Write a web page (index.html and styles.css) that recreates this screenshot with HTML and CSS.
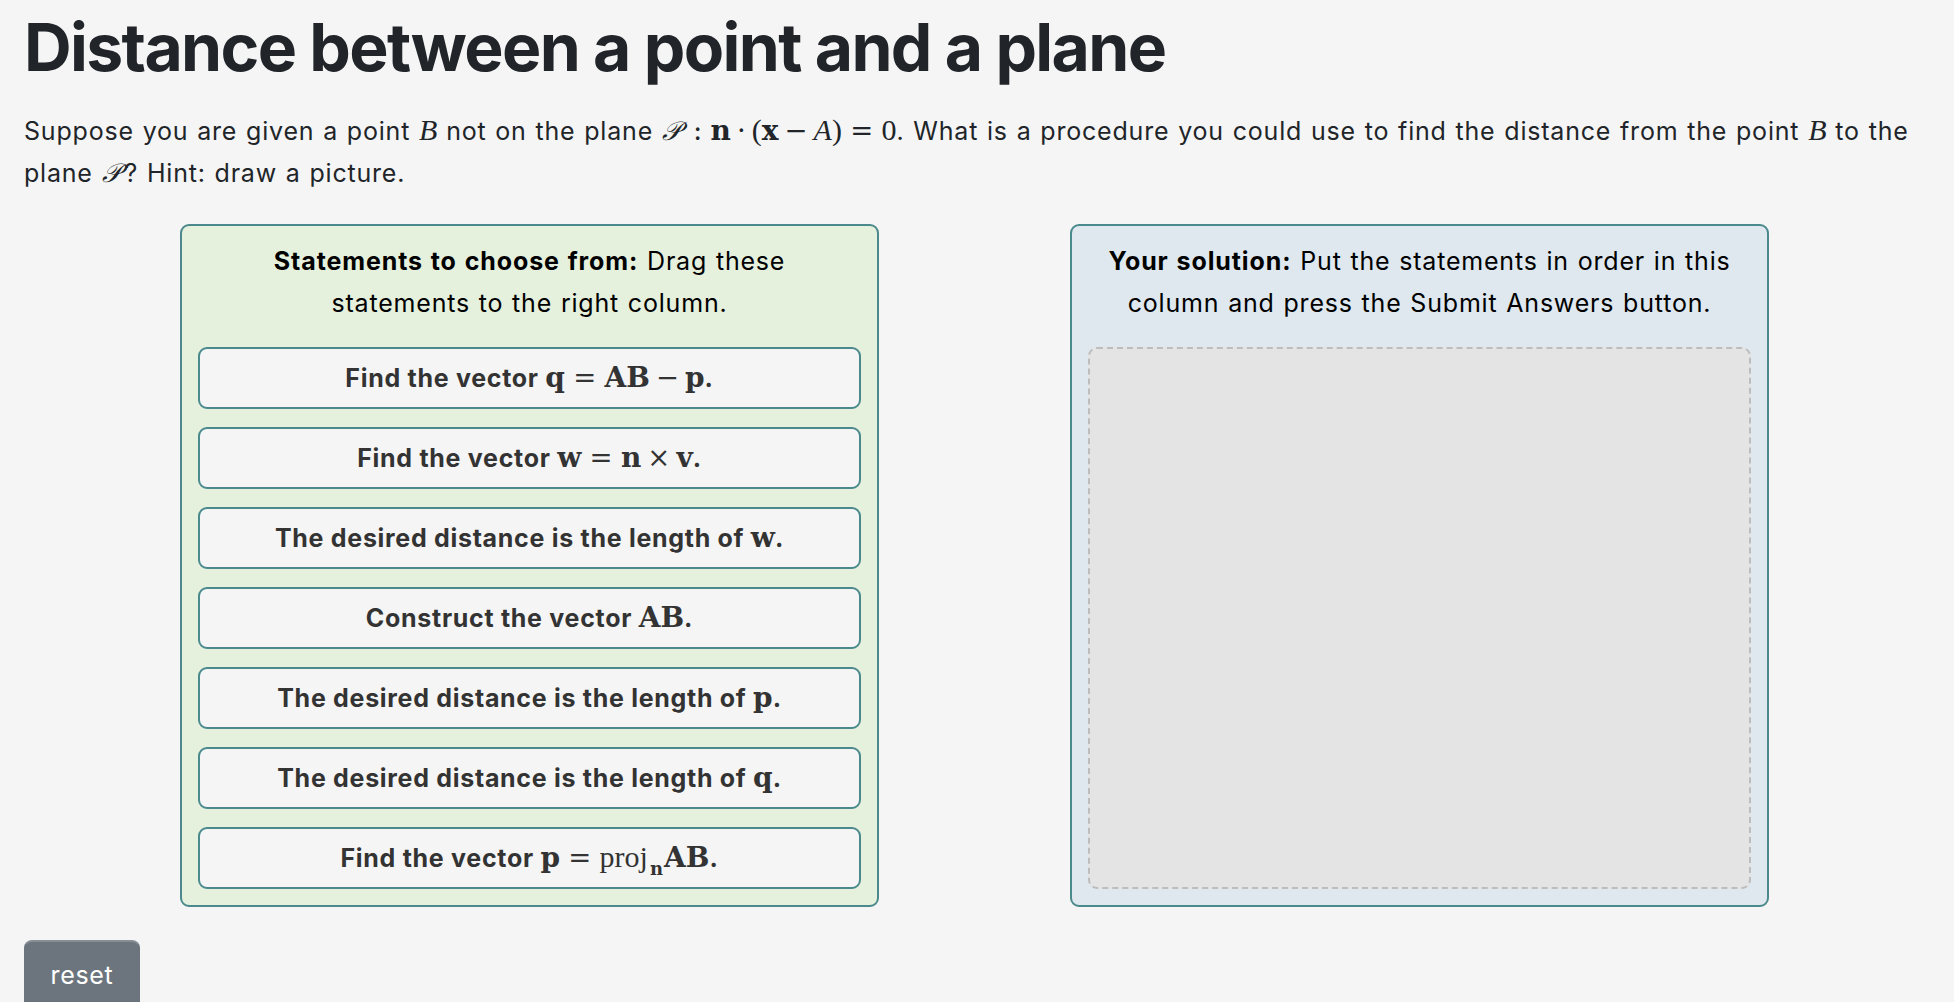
FILE: index.html
```html
<!DOCTYPE html>
<html lang="en">
<head>
<meta charset="utf-8">
<title>Distance between a point and a plane</title>
<link rel="stylesheet" href="styles.css">
</head>
<body>
<h1 class="title">Distance between a point and a plane</h1>
<p class="prompt">Suppose you are given a point <span class="mi">B</span> not on the plane <span class="cal">𝒫</span><span class="rel">:</span><span class="mb">n</span><span class="bin">·</span><span class="mr">(</span><span class="mb">x</span><span class="bin">−</span><span class="mi">A</span><span class="mr">)</span><span class="rel">=</span><span class="mr">0</span>. What is a procedure you could use to find the distance from the point <span class="mi">B</span> to the plane <span class="cal">𝒫</span>? Hint: draw a picture.</p>

<div class="columns">
  <section class="panel panel-source">
    <div class="panel-head"><strong>Statements to choose from:</strong> Drag these statements to the right column.</div>
    <ul class="items">
      <li class="item">Find the vector <span class="mb">q</span><span class="rel">=</span><span class="mb">AB</span><span class="bin">−</span><span class="mb">p</span>.</li>
      <li class="item">Find the vector <span class="mb">w</span><span class="rel">=</span><span class="mb">n</span><span class="bin">×</span><span class="mb">v</span>.</li>
      <li class="item">The desired distance is the length of <span class="mb">w</span>.</li>
      <li class="item">Construct the vector <span class="mb">AB</span>.</li>
      <li class="item">The desired distance is the length of <span class="mb">p</span>.</li>
      <li class="item">The desired distance is the length of <span class="mb">q</span>.</li>
      <li class="item">Find the vector <span class="mb">p</span><span class="rel">=</span><span class="mr">proj</span><sub class="mb sub">n</sub><span class="mb">AB</span>.</li>
    </ul>
  </section>
  <section class="panel panel-target">
    <div class="panel-head"><strong>Your solution:</strong> Put the statements in order in this column and press the Submit Answers button.</div>
    <div class="dropzone"></div>
  </section>
</div>

<button class="btn-reset" type="button">reset</button>
</body>
</html>
```

FILE: styles.css
```css
html, body {
  margin: 0;
  background: #f5f5f5;
}

body {
  padding: 0 24px;
  font-family: Inter, "Noto Sans", "Liberation Sans", sans-serif;
  font-size: 25px;
  line-height: 42px;
  letter-spacing: 0.8px;
  word-spacing: 1px;
  color: #212529;
  overflow: hidden;
  height: 1002px;
  box-sizing: border-box;
}

.title {
  margin: 8px 0 0 0;
  font-size: 66px;
  line-height: 1.2;
  font-weight: 700;
  letter-spacing: -0.025em;
  word-spacing: 0;
  color: #212529;
}

.prompt {
  margin: 23px 0 0 0;
}

strong {
  letter-spacing: 0.9px;
}

/* math */
.mi, .mb, .mr, .cal, .rel, .bin {
  line-height: 1;
  letter-spacing: 0;
  word-spacing: 0;
}
.mi {
  font-family: "Liberation Serif", "DejaVu Serif", serif;
  font-style: italic;
  font-size: 1.2em;
}
.mb {
  font-family: "DejaVu Serif", "Liberation Serif", serif;
  font-weight: 700;
  font-size: 1.12em;
}
.mr {
  font-family: "Liberation Serif", "DejaVu Serif", serif;
  font-weight: 400;
  font-size: 1.2em;
}
.cal {
  font-family: "DejaVu Serif", "Liberation Serif", serif;
  font-style: italic;
  font-size: 1.05em;
  margin-right: 0.15em;
}
.rel {
  font-family: "DejaVu Serif", "Liberation Serif", serif;
  font-weight: 400;
  font-size: 1.1em;
  margin: 0 0.3em;
}
.bin {
  font-family: "DejaVu Serif", "Liberation Serif", serif;
  font-weight: 400;
  font-size: 1.1em;
  margin: 0 0.22em;
}
.sub {
  font-size: 0.72em;
  line-height: 0;
  vertical-align: -0.45em;
  margin: 0 1px 0 2px;
}

/* columns */
.columns {
  display: flex;
  gap: 191px;
  padding-left: 156px;
  margin-top: 30px;
}

.panel {
  width: 699px;
  box-sizing: border-box;
  border: 2px solid #4b8a8c;
  border-radius: 9px;
  padding: 14px 16px 16px;
  display: flex;
  flex-direction: column;
  color: #000;
}
.panel-source { background: #e5f0dd; }
.panel-target { background: #dee8ee; }

.panel-head {
  text-align: center;
  padding: 0 10px;
}

.items {
  list-style: none;
  margin: 23px 0 0 0;
  padding: 0;
  display: flex;
  flex-direction: column;
  gap: 18px;
}

.item {
  background: #f5f5f5;
  border: 2px solid #4b8a8c;
  border-radius: 9px;
  padding: 8px 10px;
  text-align: center;
  font-weight: 700;
  letter-spacing: 0.7px;
  word-spacing: 0;
  color: #333;
}

.dropzone {
  flex: 1;
  margin-top: 23px;
  background: #e4e4e4;
  border: 2px dashed #bdbdbd;
  border-radius: 9px;
}

.btn-reset {
  display: block;
  margin-top: 33px;
  font-family: Inter, "Noto Sans", "Liberation Sans", sans-serif;
  font-size: 25px;
  line-height: 42px;
  letter-spacing: 0.65px;
  color: #fff;
  background: #6c757d;
  border: 1px solid #6c757d;
  border-top: 2px solid #878e95;
  border-radius: 8px;
  padding: 12px 0 14px;
  width: 116px;
  text-align: center;
}
```
